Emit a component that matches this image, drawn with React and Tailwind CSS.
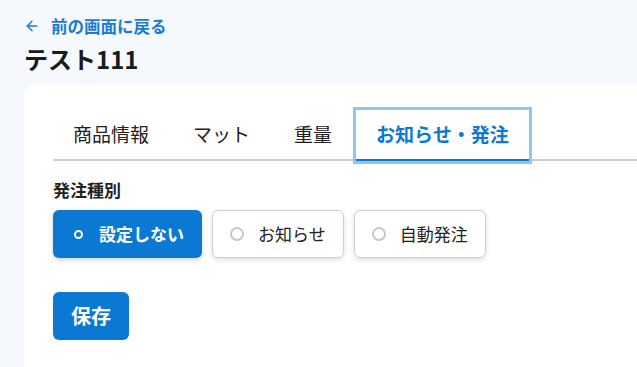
import { useState } from 'react';
import { ArrowLeft } from 'lucide-react';

const tabs = ['商品情報', 'マット', '重量', 'お知らせ・発注'];
const options = ['設定しない', 'お知らせ', '自動発注'];

export default function App() {
    const [activeTab, setActiveTab] = useState(3);
    const [orderType, setOrderType] = useState(0);

    return (
        <div
            className="flex h-screen flex-col overflow-hidden bg-[#f5f8fc] pl-6 pt-[14px] text-[#222]"
            style={{ fontFamily: '"Noto Sans CJK JP", "Noto Sans", sans-serif' }}
        >
            {/* back link */}
            <a href="#" className="flex items-center gap-[11px] text-[16.5px] font-bold leading-6 text-[#1a7bd4]">
                <ArrowLeft size={16} strokeWidth={2.25} />
                <span>前の画面に戻る</span>
            </a>

            <h1 className="mt-[5px] text-[24px] font-bold leading-8 text-[#1a1a1a]">テスト111</h1>

            {/* card */}
            <div className="mt-[9px] flex-1 rounded-tl-[12px] bg-white pl-[29px] pt-[26px]">
                <div className="flex gap-1 border-b-2 border-[#cccccc]">
                    {tabs.map((tab, i) => (
                        <button
                            key={tab}
                            onClick={() => setActiveTab(i)}
                            className={
                                i === activeTab
                                    ? '-mb-[2px] flex h-[51px] items-center border-b-2 border-[#0b78d4] px-5 text-[19px] font-bold text-[#0b78d4] outline-[3px] outline-[#94c4ee] outline-solid'
                                    : '-mb-[2px] flex h-[51px] items-center border-b-2 border-transparent px-5 text-[19px] text-[#222]'
                            }
                        >
                            {tab}
                        </button>
                    ))}
                </div>

                <p className="mt-[17px] text-[17px] font-bold leading-6">発注種別</p>

                <div className="mt-2 flex gap-[10px]">
                    {options.map((opt, i) => {
                        const selected = i === orderType;
                        return (
                            <button
                                key={opt}
                                onClick={() => setOrderType(i)}
                                className={
                                    selected
                                        ? 'flex h-[48px] items-center gap-[14px] rounded-md bg-[#0b78d4] px-[18px] text-[17px] font-bold text-white shadow-[0_2px_5px_rgba(0,0,0,0.18)]'
                                        : 'flex h-[48px] items-center gap-[14px] rounded-md border border-[#d0d0d0] bg-white px-[17px] text-[17px] text-[#222] shadow-[0_2px_5px_rgba(0,0,0,0.12)]'
                                }
                            >
                                <span className="flex h-[14px] w-[14px] items-center justify-center">
                                    {selected ? (
                                        <span className="h-[9px] w-[9px] rounded-full border-2 border-white" />
                                    ) : (
                                        <span className="h-[14px] w-[14px] rounded-full border-2 border-[#c8c8c8]" />
                                    )}
                                </span>
                                {opt}
                            </button>
                        );
                    })}
                </div>

                <button className="mt-[34px] h-[48px] rounded-md bg-[#0b78d4] px-[18px] text-[20px] font-bold text-white">
                    保存
                </button>
            </div>
        </div>
    );
}
